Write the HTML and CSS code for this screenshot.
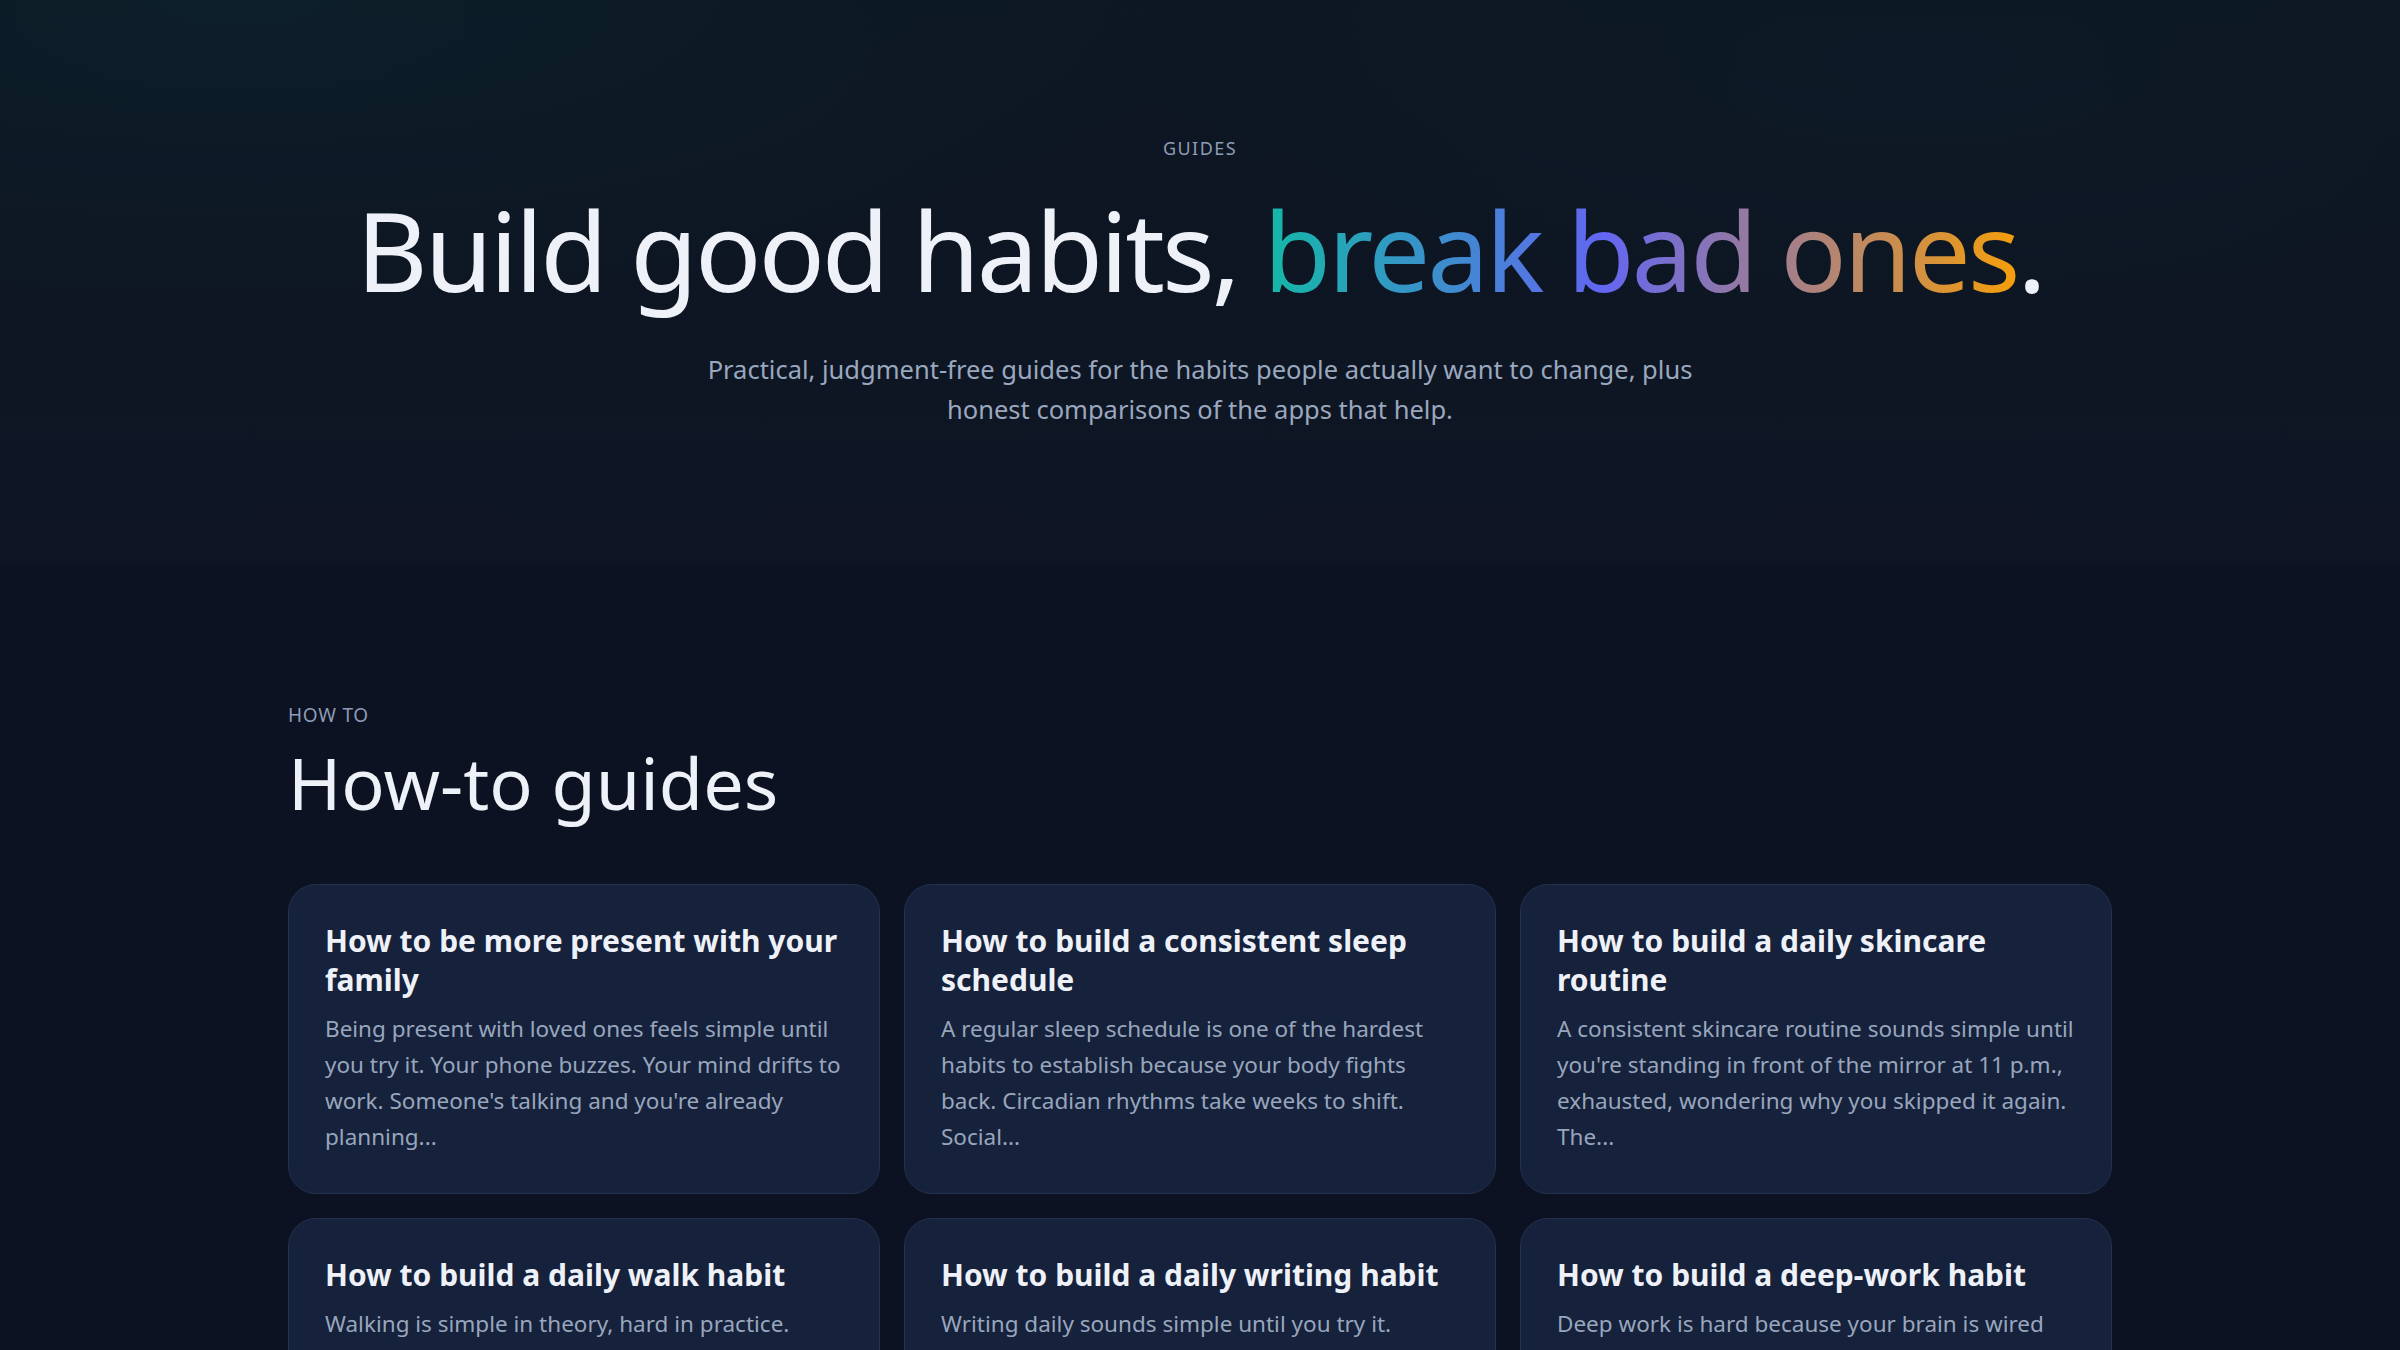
FILE: index.html
```html
<!DOCTYPE html>
<html lang="en">
<head>
    <meta charset="UTF-8">
    <meta name="viewport" content="width=device-width, initial-scale=1.0">
    <title>Guides</title>
    <link rel="stylesheet" href="styles.css">
</head>
<body>
    <header class="hero">
        <p class="eyebrow">Guides</p>
        <h1 class="hero-title">Build good habits, <span class="accent">break bad ones</span>.</h1>
        <p class="hero-lead">Practical, judgment-free guides for the habits people actually want to change, plus honest comparisons of the apps that help.</p>
    </header>

    <main class="section">
        <p class="section-label">How to</p>
        <h2 class="section-title">How-to guides</h2>

        <div class="cards">
            <a class="card" href="#">
                <h3>How to be more present with your family</h3>
                <p>Being present with loved ones feels simple until you try it. Your phone buzzes. Your mind drifts to work. Someone's talking and you're already planning...</p>
            </a>
            <a class="card" href="#">
                <h3>How to build a consistent sleep schedule</h3>
                <p>A regular sleep schedule is one of the hardest habits to establish because your body fights back. Circadian rhythms take weeks to shift. Social...</p>
            </a>
            <a class="card" href="#">
                <h3>How to build a daily skincare routine</h3>
                <p>A consistent skincare routine sounds simple until you're standing in front of the mirror at 11 p.m., exhausted, wondering why you skipped it again. The...</p>
            </a>
            <a class="card" href="#">
                <h3>How to build a daily walk habit</h3>
                <p>Walking is simple in theory, hard in practice. Weather, meetings and tired evenings all get in the way...</p>
            </a>
            <a class="card" href="#">
                <h3>How to build a daily writing habit</h3>
                <p>Writing daily sounds simple until you try it. Motivation fades, the blank page stares back and...</p>
            </a>
            <a class="card" href="#">
                <h3>How to build a deep-work habit</h3>
                <p>Deep work is hard because your brain is wired toward novelty. Every ping and tab pulls you away...</p>
            </a>
        </div>
    </main>
</body>
</html>
```

FILE: styles.css
```css
* {
    box-sizing: border-box;
}
body {
    margin: 0;
    font-family: "Noto Sans", "Open Sans", sans-serif;
    background-color: #0c1221;
    color: #eef2f8;
}

/* top banner */
.hero {
    padding: 135px 24px 136px;
    text-align: center;
    background:
        radial-gradient(ellipse 60% 80% at 10% 0%, rgba(20, 110, 120, 0.10), transparent 70%),
        radial-gradient(ellipse 50% 70% at 80% 10%, rgba(20, 90, 110, 0.06), transparent 70%),
        linear-gradient(180deg, #0c1621 0%, #0f1524 100%);
}
.eyebrow {
    margin: 0;
    font-size: 18px;
    line-height: 1.5;
    letter-spacing: 0.08em;
    text-transform: uppercase;
    color: #8e9cb5;
}
.hero-title {
    margin: 27px 0 0;
    font-size: 110px;
    font-weight: 400;
    line-height: 1.1;
    letter-spacing: -0.028em;
    color: #eef2f8;
}
.accent {
    background: linear-gradient(90deg, #14b8a6 0%, #6366f1 45%, #f59e0b 100%);
    -webkit-background-clip: text;
    background-clip: text;
    color: transparent;
}
.hero-lead {
    max-width: 1020px;
    margin: 39px auto 0;
    font-size: 25.5px;
    line-height: 40px;
    color: #9aa8bf;
}

/* guide list */
.section {
    width: 1824px;
    margin: 0 auto;
    padding: 136px 0 80px;
}
.section-label {
    margin: 0;
    font-size: 19px;
    line-height: 1.5;
    letter-spacing: 0.04em;
    text-transform: uppercase;
    color: #8e9cb5;
}
.section-title {
    margin: 9px 0 0;
    font-size: 72px;
    font-weight: 400;
    line-height: 1.2;
    color: #eef2f8;
}
.cards {
    display: grid;
    grid-template-columns: repeat(3, 1fr);
    gap: 24px;
    margin-top: 59px;
}
.card {
    display: block;
    padding: 36px 36px 38px;
    border: 1px solid #243150;
    border-radius: 28px;
    background-color: #16213b;
    color: inherit;
    text-decoration: none;
}
.card h3 {
    margin: 0;
    font-size: 30px;
    font-weight: 700;
    line-height: 39px;
    color: #eef2f8;
}
.card p {
    margin: 12px 0 0;
    font-size: 22.5px;
    line-height: 36px;
    color: #98a6bd;
}
```
